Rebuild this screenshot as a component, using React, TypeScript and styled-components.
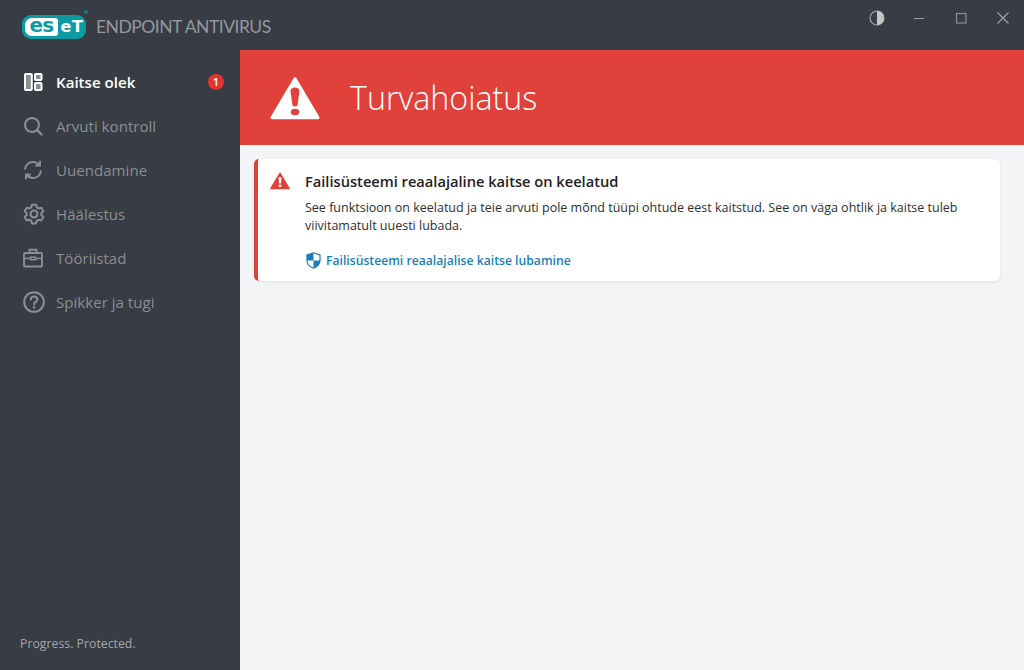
import * as React from 'react';
import styled, { createGlobalStyle } from 'styled-components';

const GlobalStyle = createGlobalStyle`
  html, body {
    margin: 0;
    padding: 0;
    height: 100%;
    overflow: hidden;
  }
  body {
    font-family: "Open Sans", "Noto Sans", "Liberation Sans", sans-serif;
  }
`;

function StatusIcon() {
  return (
    <svg width="20" height="20" viewBox="0 0 20 20" fill="#8b8e92" stroke="currentColor" strokeWidth="2">
      <rect x="2" y="2" width="6.800" height="16" rx="0.800" />
      <rect x="12" y="2" width="6.500" height="6" rx="0.800" />
      <rect x="12" y="11" width="6.500" height="7" rx="0.800" />
    </svg>
  );
}

function SearchIcon() {
  return (
    <svg width="20" height="20" viewBox="0 0 20 20" fill="none" stroke="currentColor" strokeWidth="2">
      <circle cx="9" cy="9" r="7" />
      <path d="M14.400 14.400 18.500 18.500" strokeLinecap="round" strokeWidth="2.400" />
    </svg>
  );
}

function UpdateIcon() {
  return (
    <svg width="20" height="20" viewBox="0 0 20 20" fill="none" stroke="currentColor" strokeWidth="2">
      <path d="M2 9.500C2.300 5.200 5.600 2 10 2c2.500 0 4.600 1 6 2.800" />
      <path d="M17 .8v4.800h-4.800" />
      <path d="M18 10.500c-.3 4.300-3.600 7.500-8 7.500-2.500 0-4.600-1-6-2.800" />
      <path d="M3 19.200v-4.800h4.800" />
    </svg>
  );
}

function GearIcon() {
  return (
    <svg width="22" height="22" viewBox="0 0 24 24" fill="none" stroke="currentColor" strokeWidth="2.200" strokeLinejoin="round">
      <path d="M9.800 1.800h4.400l.8 3 2 1.100 3-.8 2.200 3.800-2.200 2.200v2l2.200 2.200-2.200 3.800-3-.8-2 1.100-.8 3H9.800l-.8-3-2-1.100-3 .8-2.200-3.800 2.200-2.200v-2L1.800 8.900 4 5.100l3 .8 2-1.100z" />
      <circle cx="12" cy="12" r="3.800" />
    </svg>
  );
}

function CaseIcon() {
  return (
    <svg width="20" height="20" viewBox="0 0 20 20" fill="none" stroke="currentColor" strokeWidth="1.900">
      <rect x="1" y="5" width="18" height="13.500" rx="0.800" />
      <path d="M6.500 5V1.800h7V5" />
      <path d="M1 10.500h6M13 10.500h6M7.500 9.200h5v2.600h-5z" strokeWidth="1.500" />
    </svg>
  );
}

function HelpIcon() {
  return (
    <svg width="22" height="22" viewBox="0 0 22 22" fill="none" stroke="currentColor" strokeWidth="2">
      <circle cx="11" cy="11" r="9.800" />
      <path d="M7.800 8.600c0-1.900 1.400-3.100 3.300-3.100s3.200 1.200 3.200 2.900c0 2.500-3.300 2.500-3.300 5" strokeLinecap="round" />
      <circle cx="11" cy="16.400" r="1.300" fill="currentColor" stroke="none" />
    </svg>
  );
}

const menu = [
  { label: 'Kaitse olek', icon: <StatusIcon />, active: true, badge: 1 },
  { label: 'Arvuti kontroll', icon: <SearchIcon /> },
  { label: 'Uuendamine', icon: <UpdateIcon /> },
  { label: 'Häälestus', icon: <GearIcon /> },
  { label: 'Tööriistad', icon: <CaseIcon /> },
  { label: 'Spikker ja tugi', icon: <HelpIcon /> }
];

const App = () => {
  return (
    <Window>
      <GlobalStyle />
      <TitleBar>
        <Brand>
          <Logo>
            <LogoInner>es</LogoInner>
            <LogoTail>eT</LogoTail>
            <LogoMark />
          </Logo>
          <ProductName>ENDPOINT ANTIVIRUS</ProductName>
        </Brand>
        <WindowControls>
          <ControlButton>
            <svg width="16" height="16" viewBox="0 0 16 16">
              <circle cx="8" cy="8" r="7" fill="none" stroke="#a9acb0" strokeWidth="1.100" />
              <path d="M8 1a7 7 0 0 1 0 14z" fill="#c4c6c8" />
            </svg>
          </ControlButton>
          <ControlButton>
            <svg width="12" height="12" viewBox="0 0 12 12"><path d="M1 6.500h10" stroke="#9a9da1" strokeWidth="1" /></svg>
          </ControlButton>
          <ControlButton>
            <svg width="12" height="12" viewBox="0 0 12 12"><rect x="1.500" y="1.500" width="9.500" height="9.500" fill="none" stroke="#8d9095" strokeWidth="1.200" /></svg>
          </ControlButton>
          <ControlButton>
            <svg width="14" height="14" viewBox="0 0 14 14"><path d="M1.500 1.500l11 11M12.500 1.500l-11 11" stroke="#a4a7aa" strokeWidth="1.100" /></svg>
          </ControlButton>
        </WindowControls>
      </TitleBar>
      <Body>
        <Sidebar>
          <Nav>
            {menu.map((item) => (
              <NavItem key={item.label} $active={item.active}>
                <NavIcon>{item.icon}</NavIcon>
                <NavLabel>{item.label}</NavLabel>
                {item.badge ? <Badge>{item.badge}</Badge> : null}
              </NavItem>
            ))}
          </Nav>
          <Tagline>Progress. Protected.</Tagline>
        </Sidebar>
        <Main>
          <Banner>
            <svg width="50" height="44" viewBox="0 0 50 44">
              <path d="M25 3 47.800 41.500H2.200z" fill="#fff" stroke="#fff" strokeWidth="3.400" strokeLinejoin="round" />
              <path d="M20.500 15c0-2.200 2-3.500 4.500-3.500s4.500 1.300 4.500 3.500l-1.800 13.500c-.2 1.300-1.300 2-2.700 2s-2.500-.7-2.700-2z" fill="#e0413a" />
              <ellipse cx="25" cy="36" rx="4.200" ry="3.300" fill="#e0413a" />
            </svg>
            <BannerTitle>Turvahoiatus</BannerTitle>
          </Banner>
          <Content>
            <AlertCard>
              <AlertIcon>
                <svg width="20" height="18" viewBox="0 0 20 18">
                  <path d="M10 1.500 19 16.500H1z" fill="#e0413a" stroke="#e0413a" strokeWidth="1.600" strokeLinejoin="round" />
                  <path d="M8.500 5.200h3l-.6 6.300H9.100z" fill="#fff" />
                  <circle cx="10" cy="13.900" r="1.400" fill="#fff" />
                </svg>
              </AlertIcon>
              <AlertBody>
                <AlertTitle>Failisüsteemi reaalajaline kaitse on keelatud</AlertTitle>
                <AlertText>
                  See funktsioon on keelatud ja teie arvuti pole mõnd tüüpi ohtude eest kaitstud. See on väga ohtlik ja kaitse tuleb viivitamatult uuesti lubada.
                </AlertText>
                <AlertLink>
                  <svg width="15" height="17" viewBox="0 0 15 17">
                    <path d="M7.500 .8 14 3v5.200c0 3.800-2.700 6.600-6.500 8-3.800-1.400-6.500-4.200-6.500-8V3z" fill="#fff" stroke="#1a7fb8" strokeWidth="1.200" />
                    <path d="M7.500 .8V8.500H1V3zM7.500 8.500H14c0 3.500-2.700 6.300-6.500 7.700z" fill="#1a7fb8" />
                  </svg>
                  Failisüsteemi reaalajalise kaitse lubamine
                </AlertLink>
              </AlertBody>
            </AlertCard>
          </Content>
        </Main>
      </Body>
    </Window>
  );
};

export default App;

const Window = styled.div`
  width: 1024px;
  height: 670px;
  display: flex;
  flex-direction: column;
  background: #383c44;
  overflow: hidden;
`;

const TitleBar = styled.header`
  height: 50px;
  flex: none;
  display: flex;
  justify-content: space-between;
  background: #383c44;
`;

const Brand = styled.div`
  display: flex;
  align-items: center;
  padding-left: 22px;
  gap: 10px;
`;

const Logo = styled.div`
  position: relative;
  width: 64px;
  height: 24px;
  margin-top: 4px;
  box-sizing: border-box;
  padding: 3px 0 3px 3px;
  display: flex;
  align-items: center;
  background: #0d9aa3;
  border-radius: 9px;
  font-family: "DejaVu Sans", sans-serif;
  font-weight: 700;
`;

const LogoInner = styled.span`
  width: 33px;
  height: 18px;
  text-align: center;
  font-size: 20px;
  letter-spacing: -0.8px;
  line-height: 15px;
  color: #0d9aa3;
  background: #fff;
  border-radius: 7px 3px 3px 7px;
`;

const LogoTail = styled.span`
  flex: 1;
  height: 18px;
  text-align: center;
  font-size: 16px;
  line-height: 18px;
  letter-spacing: 0.5px;
  color: #fff;
`;

const LogoMark = styled.i`
  position: absolute;
  top: -5px;
  right: -2px;
  width: 4px;
  height: 4px;
  border-radius: 50%;
  background: #0a7a82;
`;

const ProductName = styled.span`
  font-family: "Lato", "Open Sans", sans-serif;
  font-size: 17.500px;
  font-weight: 400;
  letter-spacing: -0.500px;
  color: #94979c;
  margin-top: 3px;
`;

const WindowControls = styled.div`
  display: flex;
  align-items: flex-start;
`;

const ControlButton = styled.div`
  width: 42px;
  height: 36px;
  display: flex;
  align-items: center;
  justify-content: center;
`;

const Body = styled.div`
  flex: 1;
  display: flex;
  min-height: 0;
`;

const Sidebar = styled.aside`
  width: 240px;
  flex: none;
  display: flex;
  flex-direction: column;
  justify-content: space-between;
  background: #383c44;
`;

const Nav = styled.nav`
  display: flex;
  flex-direction: column;
  padding-top: 10px;
`;

const NavItem = styled.div<{ $active?: boolean }>`
  height: 44px;
  display: flex;
  align-items: center;
  padding: 0 16px 0 24px;
  color: ${(p) => (p.$active ? '#ffffff' : '#8b8e92')};
  font-weight: ${(p) => (p.$active ? 600 : 400)};
`;

const NavIcon = styled.span`
  width: 32px;
  height: 22px;
  flex: none;
  display: flex;
  align-items: center;
  margin-left: -1px;
  margin-right: 1px;
`;

const NavLabel = styled.span`
  flex: 1;
  font-size: 15.100px;
  white-space: nowrap;
`;

const Badge = styled.span`
  width: 16px;
  height: 16px;
  border-radius: 50%;
  background: #e1342f;
  color: #fff;
  font-size: 11px;
  line-height: 16px;
  text-align: center;
  font-weight: 600;
  margin-bottom: 1px;
`;

const Tagline = styled.div`
  font-size: 12.300px;
  color: #a5a7ab;
  padding: 0 0 19px 20px;
  line-height: 15px;
`;

const Main = styled.main`
  flex: 1;
  min-width: 0;
  display: flex;
  flex-direction: column;
  background: #f3f4f6;
`;

const Banner = styled.div`
  height: 95px;
  flex: none;
  display: flex;
  align-items: center;
  gap: 30px;
  padding-left: 30px;
  background: #e0413a;
`;

const BannerTitle = styled.h1`
  margin: 0;
  font-size: 32.200px;
  font-weight: 300;
  color: #fff;
`;

const Content = styled.div`
  padding: 14px 24px 0 14px;
`;

const AlertCard = styled.section`
  display: flex;
  box-sizing: border-box;
  height: 122px;
  padding: 12px 20px 0 12px;
  gap: 15px;
  background: #fff;
  border-left: 4px solid #e0413a;
  border-radius: 5px;
  box-shadow: 0 1px 3px rgba(0, 0, 0, 0.08);
`;

const AlertIcon = styled.div`
  flex: none;
  width: 20px;
  height: 18px;
  margin-top: 1px;
`;

const AlertBody = styled.div`
  flex: 1;
  min-width: 0;
`;

const AlertTitle = styled.h2`
  margin: 0;
  font-size: 14.650px;
  line-height: 20px;
  font-weight: 600;
  color: #1f2024;
`;

const AlertText = styled.p`
  margin: 8px 0 0;
  font-size: 12.500px;
  line-height: 18px;
  color: #2d2f33;
`;

const AlertLink = styled.a`
  display: flex;
  align-items: center;
  gap: 5px;
  margin-top: 17px;
  margin-left: 1px;
  font-size: 12.200px;
  font-weight: 600;
  color: #1a7fb8;
`;
